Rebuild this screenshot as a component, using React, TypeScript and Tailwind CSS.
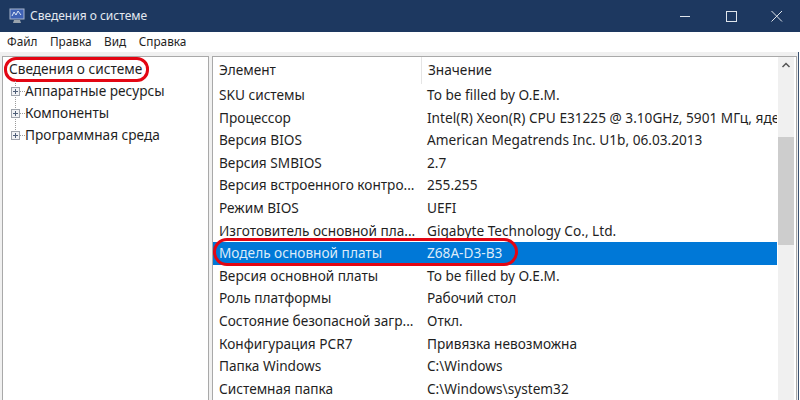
const rows: [string, string][] = [
  ["SKU системы", "To be filled by O.E.M."],
  ["Процессор", "Intel(R) Xeon(R) CPU E31225 @ 3.10GHz, 5901 МГц, ядер: 4"],
  ["Версия BIOS", "American Megatrends Inc. U1b, 06.03.2013"],
  ["Версия SMBIOS", "2.7"],
  ["Версия встроенного контро...", "255.255"],
  ["Режим BIOS", "UEFI"],
  ["Изготовитель основной пла...", "Gigabyte Technology Co., Ltd."],
  ["Модель основной платы", "Z68A-D3-B3"],
  ["Версия основной платы", "To be filled by O.E.M."],
  ["Роль платформы", "Рабочий стол"],
  ["Состояние безопасной загр...", "Откл."],
  ["Конфигурация PCR7", "Привязка невозможна"],
  ["Папка Windows", "C:\\Windows"],
  ["Системная папка", "C:\\Windows\\system32"],
];

function Plus() {
  return (
    <svg width="9" height="9" viewBox="0 0 9 9" className="shrink-0 bg-white">
      <rect x="0.5" y="0.5" width="8" height="8" fill="#f1f2f5" stroke="#9ea3ab" />
      <path d="M2 4.5H7M4.5 2V7" stroke="#4f5f78" />
    </svg>
  );
}

export default function App() {
  return (
    <div className="w-[800px] h-[400px] overflow-hidden flex flex-col bg-white font-['Noto_Sans','Roboto',sans-serif] text-[13.65px] text-[#1f1f1f]">
      <div className="h-[32px] shrink-0 bg-[#1d3860] flex items-center text-[#e2e8f0] pl-[9px]">
        <svg width="16" height="16" viewBox="0 0 16 16" className="shrink-0">
          <rect x="1" y="1" width="14" height="10" fill="#3f62b5" stroke="#aab6cc" />
          <path d="M3 8L5 4L7 7L9 3L12 7" stroke="#dce6f5" fill="none" />
          <path d="M5 12H11L12 15H4Z" fill="#9aa3ad" />
        </svg>
        <span className="ml-[5px] text-[12px]">Сведения о системе</span>
        <div className="ml-auto flex items-center">
          <svg width="46" height="32" viewBox="0 0 46 32"><path d="M18 16.5H28" stroke="#dfe5ec" /></svg>
          <svg width="46" height="32" viewBox="0 0 46 32"><rect x="18.5" y="11.5" width="10" height="10" fill="none" stroke="#dfe5ec" /></svg>
          <svg width="46" height="32" viewBox="0 0 46 32"><path d="M17.5 11L28 21.5M28 11L17.5 21.5" stroke="#dfe5ec" /></svg>
        </div>
      </div>
      <div className="h-[20px] shrink-0 bg-white flex items-center gap-[12.5px] pl-[7px] text-[11.8px]">
        <span>Файл</span>
        <span>Правка</span>
        <span>Вид</span>
        <span>Справка</span>
      </div>
      <div className="flex-1 min-h-0 flex pt-[4px] pl-[2px] pr-[1px] gap-[3px] bg-[#f0f0f0] mr-[1px] border-r border-[#3a5272]">
        <div className="w-[207px] shrink-0 bg-white border border-[#a9a9a9] border-b-0 relative pt-[1px]">
          <div className="h-[22px] flex items-center pl-[6px]">
            <span>Сведения о системе</span>
          </div>
          <div className="absolute left-[1px] top-[0px] w-[145px] h-[25px] rounded-[12px] border-[3px] border-[#e30613]" />
          <div className="absolute left-[12px] top-[24px] h-[55px] border-l border-dotted border-[#999]" />
          {["Аппаратные ресурсы", "Компоненты", "Программная среда"].map((t) => (
            <div key={t} className="h-[22px] flex items-center pl-[8px] relative">
              <Plus />
              <div className="w-[5px] shrink-0 border-t border-dotted border-[#999]" />
              <span>{t}</span>
            </div>
          ))}
        </div>
        <div className="flex-1 min-w-0 bg-white border border-[#a9a9a9] border-b-0 flex">
          <div className="flex-1 min-w-0 relative">
            <div className="h-[27px] flex items-center">
              <span className="w-[208px] pl-[6px]">Элемент</span>
              <span className="pl-[6px] border-l border-[#e5e5e5] h-[27px] flex items-center">Значение</span>
            </div>
            {rows.map(([a, b]) => {
              const sel = a === "Модель основной платы";
              return (
                <div key={a} className={`h-[22.6px] mr-[1px] flex items-center whitespace-nowrap overflow-hidden ${sel ? "bg-[#0078d7] text-[#dcebf9]" : ""}`}>
                  <span className="w-[208px] shrink-0 pl-[6px]">{a}</span>
                  <span className="pl-[6px]">{b}</span>
                </div>
              );
            })}
            <div className="absolute left-[0px] top-[181px] w-[305px] h-[28px] rounded-[14px] border-[3px] border-[#e30613]" />
          </div>
          <div className="w-[16px] mr-[2px] shrink-0 bg-[#f0f0f0] flex flex-col items-center">
            <svg width="16" height="17" viewBox="0 0 16 17"><path d="M4.5 10L8 6.5L11.5 10" stroke="#555" strokeWidth="1.5" fill="none" /></svg>
            <div className="w-full h-[108px] mt-[63px] bg-[#cdcdcd]" />
          </div>
        </div>
      </div>
    </div>
  );
}
